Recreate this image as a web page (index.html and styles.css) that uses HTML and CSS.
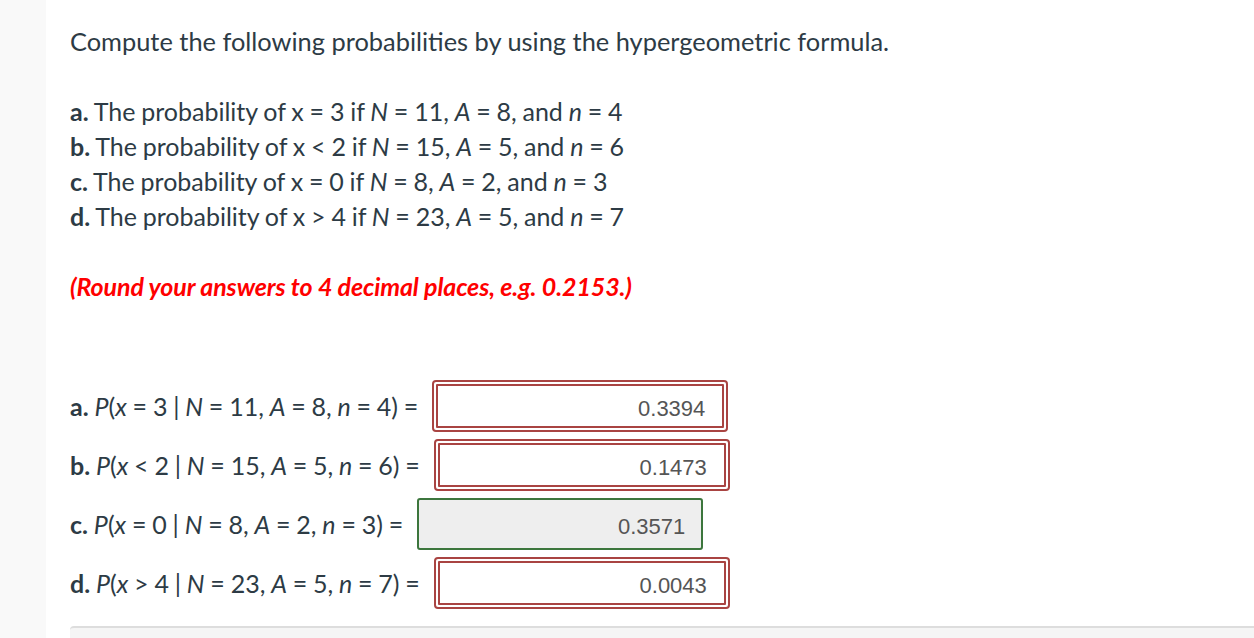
FILE: index.html
```html
<!DOCTYPE html>
<html>
<head>
<meta charset="utf-8">
<link rel="stylesheet" href="styles.css">
</head>
<body>
<div class="page">
  <aside class="rail"></aside>
  <main class="content">
    <p class="title">Compute the following probabilities by using the hypergeometric formula.</p>
    <div class="items">
      <div><b>a.</b> The probability of x = 3 if <i>N</i> = 11, <i>A</i> = 8, and <i>n</i> = 4</div>
      <div><b>b.</b> The probability of x &lt; 2 if <i>N</i> = 15, <i>A</i> = 5, and <i>n</i> = 6</div>
      <div><b>c.</b> The probability of x = 0 if <i>N</i> = 8, <i>A</i> = 2, and <i>n</i> = 3</div>
      <div><b>d.</b> The probability of x &gt; 4 if <i>N</i> = 23, <i>A</i> = 5, and <i>n</i> = 7</div>
    </div>
    <p class="note">(Round your answers to 4 decimal places, e.g. 0.2153.)</p>
    <div class="answers">
      <div class="row">
        <span class="label"><b>a.</b> <i>P</i>(<i>x</i> = 3 | <i>N</i> = 11, <i>A</i> = 8, <i>n</i> = 4) =</span>
        <span class="wrong"><span class="field">0.3394</span></span>
      </div>
      <div class="row">
        <span class="label"><b>b.</b> <i>P</i>(<i>x</i> &lt; 2 | <i>N</i> = 15, <i>A</i> = 5, <i>n</i> = 6) =</span>
        <span class="wrong"><span class="field">0.1473</span></span>
      </div>
      <div class="row">
        <span class="label"><b>c.</b> <i>P</i>(<i>x</i> = 0 | <i>N</i> = 8, <i>A</i> = 2, <i>n</i> = 3) =</span>
        <span class="field correct">0.3571</span>
      </div>
      <div class="row">
        <span class="label"><b>d.</b> <i>P</i>(<i>x</i> &gt; 4 | <i>N</i> = 23, <i>A</i> = 5, <i>n</i> = 7) =</span>
        <span class="wrong"><span class="field">0.0043</span></span>
      </div>
    </div>
    <div class="panel"></div>
  </main>
</div>
</body>
</html>
```
FILE: styles.css
```css
html, body {
  margin: 0;
  padding: 0;
  background: #ffffff;
}
.page {
  display: flex;
  height: 638px;
  overflow: hidden;
}
.rail {
  width: 46px;
  flex: none;
  background: #f9f9f9;
}
.content {
  flex: 1;
  padding: 25px 0 0 24px;
  font-family: Lato, "Open Sans", sans-serif;
  font-size: 25px;
  color: #2d3b45;
}
.title {
  margin: 0;
  line-height: 33px;
  font-size: 25.4px;
}
.items {
  margin-top: 36px;
  line-height: 35px;
  word-spacing: -0.6px;
}
.items b, .label b {
  font-weight: 700;
}
.note {
  margin: 35px 0 0 0;
  line-height: 35px;
  color: #ff0000;
  font-weight: 700;
  font-style: italic;
  letter-spacing: -0.12px;
}
.answers {
  margin-top: 76px;
  display: flex;
  flex-direction: column;
  gap: 7px;
}
.row {
  display: flex;
  align-items: center;
  gap: 14px;
  height: 52px;
}
.label {
  white-space: nowrap;
  word-spacing: -0.6px;
}
.field {
  box-sizing: border-box;
  display: flex;
  align-items: center;
  justify-content: flex-end;
  font-family: "Liberation Sans", Arial, sans-serif;
  font-size: 22px;
  color: #555555;
  border-radius: 3px;
  padding-top: 5px;
}
.wrong {
  box-sizing: border-box;
  display: block;
  width: 296px;
  height: 52px;
  padding: 2px;
  border: 2px solid #a94442;
  border-radius: 4px;
  background: #ffffff;
}
.wrong .field {
  width: 100%;
  height: 100%;
  border: 2px solid #a94442;
  border-radius: 1px;
  padding-right: 17px;
}
.field.correct {
  width: 286px;
  height: 52px;
  border: 2px solid #3c763d;
  background: #eeeeee;
  padding-right: 16px;
}
.panel {
  margin-top: 17px;
  height: 40px;
  background: #f5f5f5;
  border-top: 2px solid #dddddd;
  border-radius: 4px 0 0 0;
}
```
